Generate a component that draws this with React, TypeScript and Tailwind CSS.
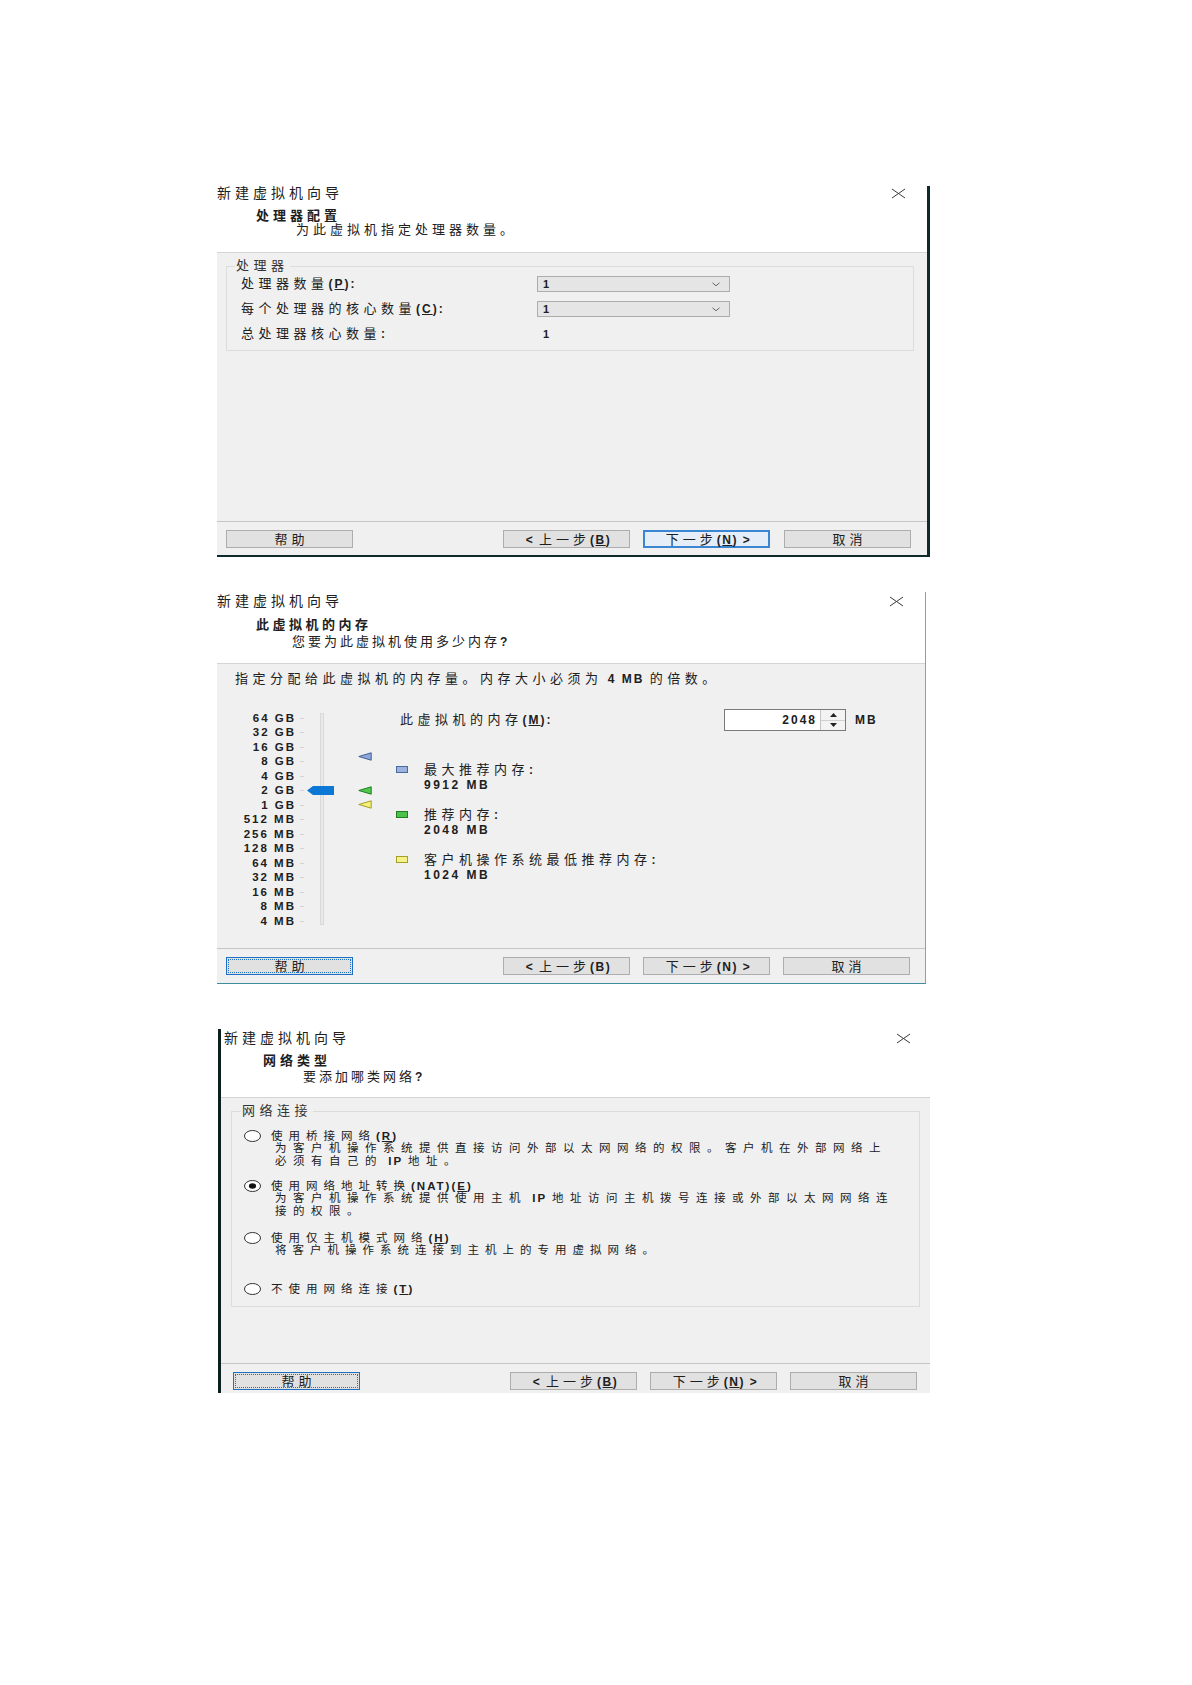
import React from "react";

// "&X" in a string underlines X (Windows accelerator style)
function Acc({ s }: { s: string }) {
  const bits = s.split("&");
  return (
    <>
      {bits[0]}
      {bits.slice(1).map((b, i) => (
        <React.Fragment key={i}>
          <span className="underline underline-offset-1">{b[0]}</span>
          {b.slice(1)}
        </React.Fragment>
      ))}
    </>
  );
}

// splits a string into CJK and latin runs; latin is drawn bold like the original
function T({
  s,
  zh = "tracking-[4.5px]",
  en = "tracking-[2px]",
  enSize = "text-[12px]",
}: {
  s: string;
  zh?: string;
  en?: string;
  enSize?: string;
}) {
  const runs = s.match(/[^\x00-\x7f]+|[\x00-\x7f]+/g) ?? [];
  return (
    <span className="whitespace-pre">
      {runs.map((r, i) =>
        /^[\x00-\x7f]/.test(r) ? (
          <span key={i} className={"font-bold " + enSize + " " + en}>
            <Acc s={r} />
          </span>
        ) : (
          <span key={i} className={zh}>
            {r}
          </span>
        )
      )}
    </span>
  );
}

function CloseX() {
  return (
    <svg width="15" height="11" viewBox="0 0 15 11">
      <path d="M1 1L14 10M14 1L1 10" stroke="#3a3a3a" strokeWidth="1" fill="none" />
    </svg>
  );
}

function Btn({ label, cls }: { label: string; cls: string }) {
  return (
    <div
      className={
        "h-[18px] w-[127px] shrink-0 flex items-center justify-center text-[13px] leading-none " + cls
      }
    >
      <span className="pl-[4px]">
        <T s={label} zh="tracking-[4px]" en="tracking-[1.5px]" />
      </span>
    </div>
  );
}

const plain = "bg-[#e1e1e1] border border-[#adadad]";
const focusNext = "bg-[#e5eef8] border-2 border-[#3b86d3]";
const focusHelp = "bg-[#e1e1e1] border border-[#1f6fc4] outline-1 outline-dotted outline-[#1f6fc4] -outline-offset-3";

function Title({ s }: { s: string }) {
  return (
    <span className="text-[14px] leading-[14px]">
      <T s={s} zh="tracking-[4px]" />
    </span>
  );
}

function Combo() {
  return (
    <div className="w-[193px] h-[16px] bg-[#e5e5e5] border border-[#adadad] flex items-center justify-between pl-[5px] pr-[9px]">
      <span className="text-[11px] font-bold leading-none">1</span>
      <svg width="8" height="5" viewBox="0 0 8 5">
        <path d="M0.5 0.8L4 3.8L7.5 0.8" stroke="#666" strokeWidth="1" fill="none" />
      </svg>
    </div>
  );
}

function ProcessorDialog() {
  return (
    <div className="ml-[217px] w-[713px] border-r-[3px] border-b-2 border-[#0e2a2b]">
      <div className="h-[67px] bg-white border-b border-[#d4d4d4]">
        <div className="flex items-center justify-between h-[14px] pr-[21px]">
          <Title s="新建虚拟机向导" />
          <CloseX />
        </div>
        <div className="mt-[9px] pl-[39px] text-[13px] leading-[14px] font-bold">
          <T s="处理器配置" zh="tracking-[4px]" />
        </div>
        <div className="pl-[79px] text-[13px] leading-[14px]">
          <T s="为此虚拟机指定处理器数量。" zh="tracking-[4px]" />
        </div>
      </div>
      <div className="h-[268px] bg-[#f0f0f0] pt-[13px] pl-[9px] pr-[13px]">
        <div className="relative h-[85px] border border-[#dcdcdc] pt-[9px] pl-[14px] flex flex-col gap-[9px] text-[13px] leading-[16px]">
          <span className="absolute -top-[8px] left-[8px] bg-[#f0f0f0] px-[1px] leading-[14px] text-[#333]">
            <T s="处理器" />
          </span>
          <div className="flex items-center h-[16px]">
            <span className="w-[296px]">
              <T s="处理器数量(&P):" />
            </span>
            <Combo />
          </div>
          <div className="flex items-center h-[16px]">
            <span className="w-[296px]">
              <T s="每个处理器的核心数量(&C):" />
            </span>
            <Combo />
          </div>
          <div className="flex items-center h-[16px]">
            <span className="w-[296px]">
              <T s="总处理器核心数量:" />
            </span>
            <span className="pl-[6px] text-[11px] font-bold">1</span>
          </div>
        </div>
      </div>
      <div className="h-[34px] bg-[#f0f0f0] border-t border-[#c6c6c6] pt-[8px] flex">
        <Btn label="帮助" cls={"ml-[9px] " + plain} />
        <Btn label="< 上一步(&B)" cls={"ml-[150px] " + plain} />
        <Btn label="下一步(&N) >" cls={"ml-[13px] " + focusNext} />
        <Btn label="取消" cls={"ml-[14px] " + plain} />
      </div>
    </div>
  );
}

const scale = [
  "64 GB", "32 GB", "16 GB", "8 GB", "4 GB", "2 GB", "1 GB",
  "512 MB", "256 MB", "128 MB", "64 MB", "32 MB", "16 MB", "8 MB", "4 MB",
];

function Marker({ fill, stroke, top }: { fill: string; stroke: string; top: string }) {
  return (
    <svg className={"absolute left-[141px] " + top} width="14" height="9" viewBox="0 0 14 9">
      <path d="M0.8 4.5L13.2 0.8V8.2Z" fill={fill} stroke={stroke} strokeWidth="1" />
    </svg>
  );
}

function Slider() {
  return (
    <div className="relative w-[179px] h-[220px] pt-[2px]">
      <div className="flex flex-col w-[87px]">
        {scale.map((l) => (
          <div key={l} className="h-[14.5px] flex items-center justify-end">
            <span className="text-[11.5px] font-bold tracking-[2px] leading-none">{l}</span>
            <span className="ml-[4px] w-[4px] h-px bg-[#d4d4d4]" />
          </div>
        ))}
      </div>
      <div className="absolute left-[103px] top-[4px] w-[4px] h-[212px] border border-[#d9d9d9] bg-[#e9e9e9]" />
      <svg className="absolute left-[90px] top-[77px]" width="27" height="9" viewBox="0 0 27 9">
        <path d="M0 4.5L6 0H27V9H6Z" fill="#0a78d4" />
      </svg>
      <Marker fill="#8ea9d8" stroke="#3e5f9c" top="top-[43px]" />
      <Marker fill="#4fc84f" stroke="#1f7f1f" top="top-[77px]" />
      <Marker fill="#f3ef7a" stroke="#a3a024" top="top-[91px]" />
    </div>
  );
}

function Legend({ sq, title, value, cls }: { sq: string; title: string; value: string; cls: string }) {
  return (
    <div className={"flex text-[13px] " + cls}>
      <span className={"mt-[4px] w-[12px] h-[7px] border " + sq} />
      <div className="ml-[16px] flex flex-col">
        <div className="h-[15px] flex items-center leading-none">
          <T s={title} />
        </div>
        <div className="h-[15px] flex items-center leading-none">
          <T s={value} en="tracking-[2.5px]" />
        </div>
      </div>
    </div>
  );
}

function MemoryDialog() {
  return (
    <div className="mt-[35px] ml-[217px] w-[709px] border-r border-b border-r-[#55b4d2] border-b-[#3c8e9c]">
      <div className="h-[72px] bg-white border-b border-[#d4d4d4] pt-[2px]">
        <div className="flex items-center justify-between h-[14px] pr-[21px]">
          <Title s="新建虚拟机向导" />
          <CloseX />
        </div>
        <div className="mt-[10px] pl-[39px] text-[13px] leading-[14px] font-bold">
          <T s="此虚拟机的内存" zh="tracking-[3.5px]" />
        </div>
        <div className="mt-[3px] pl-[75px] text-[13px] leading-[14px]">
          <T s="您要为此虚拟机使用多少内存?" zh="tracking-[3px]" />
        </div>
      </div>
      <div className="h-[284px] bg-[#f0f0f0] pt-[8px]">
        <div className="pl-[18px] text-[13px] leading-[14px]">
          <T s="指定分配给此虚拟机的内存量。内存大小必须为 4 MB 的倍数。" />
        </div>
        <div className="mt-[23px] flex items-start">
          <Slider />
          <div className="flex flex-col">
            <div className="flex items-center h-[22px] text-[13px]">
              <span className="w-[328px] pl-[4px]">
                <T s="此虚拟机的内存(&M):" />
              </span>
              <div className="w-[122px] h-[22px] bg-white border border-[#7a7a7a] flex">
                <span className="flex-1 text-right pr-[3px] font-bold tracking-[2px] leading-[20px] text-[12px]">
                  2048
                </span>
                <div className="w-[25px] border-l border-[#c4c4c4] bg-[#f3f3f3] flex flex-col">
                  <div className="flex-1 flex items-center justify-center border-b border-[#d0d0d0]">
                    <svg width="7" height="4" viewBox="0 0 7 4">
                      <path d="M0 4L3.5 0L7 4Z" fill="#222" />
                    </svg>
                  </div>
                  <div className="flex-1 flex items-center justify-center">
                    <svg width="7" height="4" viewBox="0 0 7 4">
                      <path d="M0 0L3.5 4L7 0Z" fill="#222" />
                    </svg>
                  </div>
                </div>
              </div>
              <span className="ml-[9px] font-bold text-[12px] tracking-[2px]">MB</span>
            </div>
            <Legend sq="bg-[#9bb3dc] border-[#4a6aa4]" title="最大推荐内存:" value="9912 MB" cls="mt-[31px]" />
            <Legend sq="bg-[#4cc24c] border-[#1f7f1f]" title="推荐内存:" value="2048 MB" cls="mt-[15px]" />
            <Legend
              sq="bg-[#f6f28a] border-[#a3a024]"
              title="客户机操作系统最低推荐内存:"
              value="1024 MB"
              cls="mt-[15px]"
            />
          </div>
        </div>
      </div>
      <div className="h-[35px] bg-[#f0f0f0] border-t border-[#c6c6c6] pt-[8px] flex">
        <Btn label="帮助" cls={"ml-[9px] " + focusHelp} />
        <Btn label="< 上一步(B)" cls={"ml-[150px] " + plain} />
        <Btn label="下一步(N) >" cls={"ml-[13px] " + plain} />
        <Btn label="取消" cls={"ml-[13px] " + plain} />
      </div>
    </div>
  );
}

function Radio({ on }: { on?: boolean }) {
  return (
    <svg width="17" height="12" viewBox="0 0 17 12" className="shrink-0">
      <ellipse cx="8.5" cy="6" rx="8" ry="5.5" fill="#fff" stroke="#333" strokeWidth="1" />
      {on && <ellipse cx="8.5" cy="6" rx="3.6" ry="2.8" fill="#111" />}
    </svg>
  );
}

function Option({
  label,
  lines,
  on,
  cls,
  zh = "tracking-[6.5px]",
}: {
  label: string;
  lines: string[];
  on?: boolean;
  cls: string;
  zh?: string;
}) {
  return (
    <div className={"flex flex-col text-[11.5px] " + cls}>
      <div className="flex items-center h-[12.5px] leading-none">
        <Radio on={on} />
        <span className="ml-[10px] whitespace-nowrap">
          <T s={label} zh="tracking-[6px]" enSize="text-[11.5px]" />
        </span>
      </div>
      {lines.map((l) => (
        <div key={l} className="h-[12.5px] flex items-center leading-none pl-[31px] whitespace-nowrap">
          <T s={l} zh={zh} enSize="text-[11.5px]" />
        </div>
      ))}
    </div>
  );
}

function NetworkDialog() {
  return (
    <div className="mt-[45px] ml-[218px] w-[712px] border-l-[3px] border-[#0b1f20]">
      <div className="h-[69px] bg-white border-b border-[#d4d4d4] pt-[2px]">
        <div className="flex items-center justify-between h-[14px] pl-[3px] pr-[19px]">
          <Title s="新建虚拟机向导" />
          <CloseX />
        </div>
        <div className="mt-[9px] pl-[42px] text-[13px] leading-[14px] font-bold">
          <T s="网络类型" zh="tracking-[4px]" />
        </div>
        <div className="mt-[2px] pl-[82px] text-[13px] leading-[14px]">
          <T s="要添加哪类网络?" zh="tracking-[3px]" />
        </div>
      </div>
      <div className="h-[265px] bg-[#f0f0f0] pt-[13px] pl-[10px] pr-[10px]">
        <div className="relative h-[196px] border border-[#dcdcdc] pt-[18px] pl-[12px] flex flex-col">
          <span className="absolute -top-[8px] left-[9px] bg-[#f0f0f0] px-[1px] text-[13px] leading-[14px] text-[#333]">
            <T s="网络连接" />
          </span>
          <Option
            label="使用桥接网络(&R)"
            lines={["为客户机操作系统提供直接访问外部以太网网络的权限。客户机在外部网络上", "必须有自己的 IP 地址。"]}
            cls=""
          />
          <Option
            on
            label="使用网络地址转换(NAT)(&E)"
            lines={["为客户机操作系统提供使用主机 IP 地址访问主机拨号连接或外部以太网网络连", "接的权限。"]}
            cls="mt-[12.5px]"
          />
          <Option
            label="使用仅主机模式网络(&H)"
            lines={["将客户机操作系统连接到主机上的专用虚拟网络。"]}
            cls="mt-[14.5px]"
            zh="tracking-[6px]"
          />
          <Option label="不使用网络连接(&T)" lines={[]} cls="mt-[26px]" />
        </div>
      </div>
      <div className="h-[30px] bg-[#f0f0f0] border-t border-[#c6c6c6] pt-[8px] flex">
        <Btn label="帮助" cls={"ml-[12px] " + focusHelp} />
        <Btn label="< 上一步(&B)" cls={"ml-[150px] " + plain} />
        <Btn label="下一步(&N) >" cls={"ml-[13px] " + plain} />
        <Btn label="取消" cls={"ml-[13px] " + plain} />
      </div>
    </div>
  );
}

export default function App() {
  return (
    <div className="min-h-[1685px] bg-white pt-[186px] text-[#202020] font-['Liberation_Sans','Noto_Sans_CJK_SC',sans-serif]">
      <ProcessorDialog />
      <MemoryDialog />
      <NetworkDialog />
    </div>
  );
}
